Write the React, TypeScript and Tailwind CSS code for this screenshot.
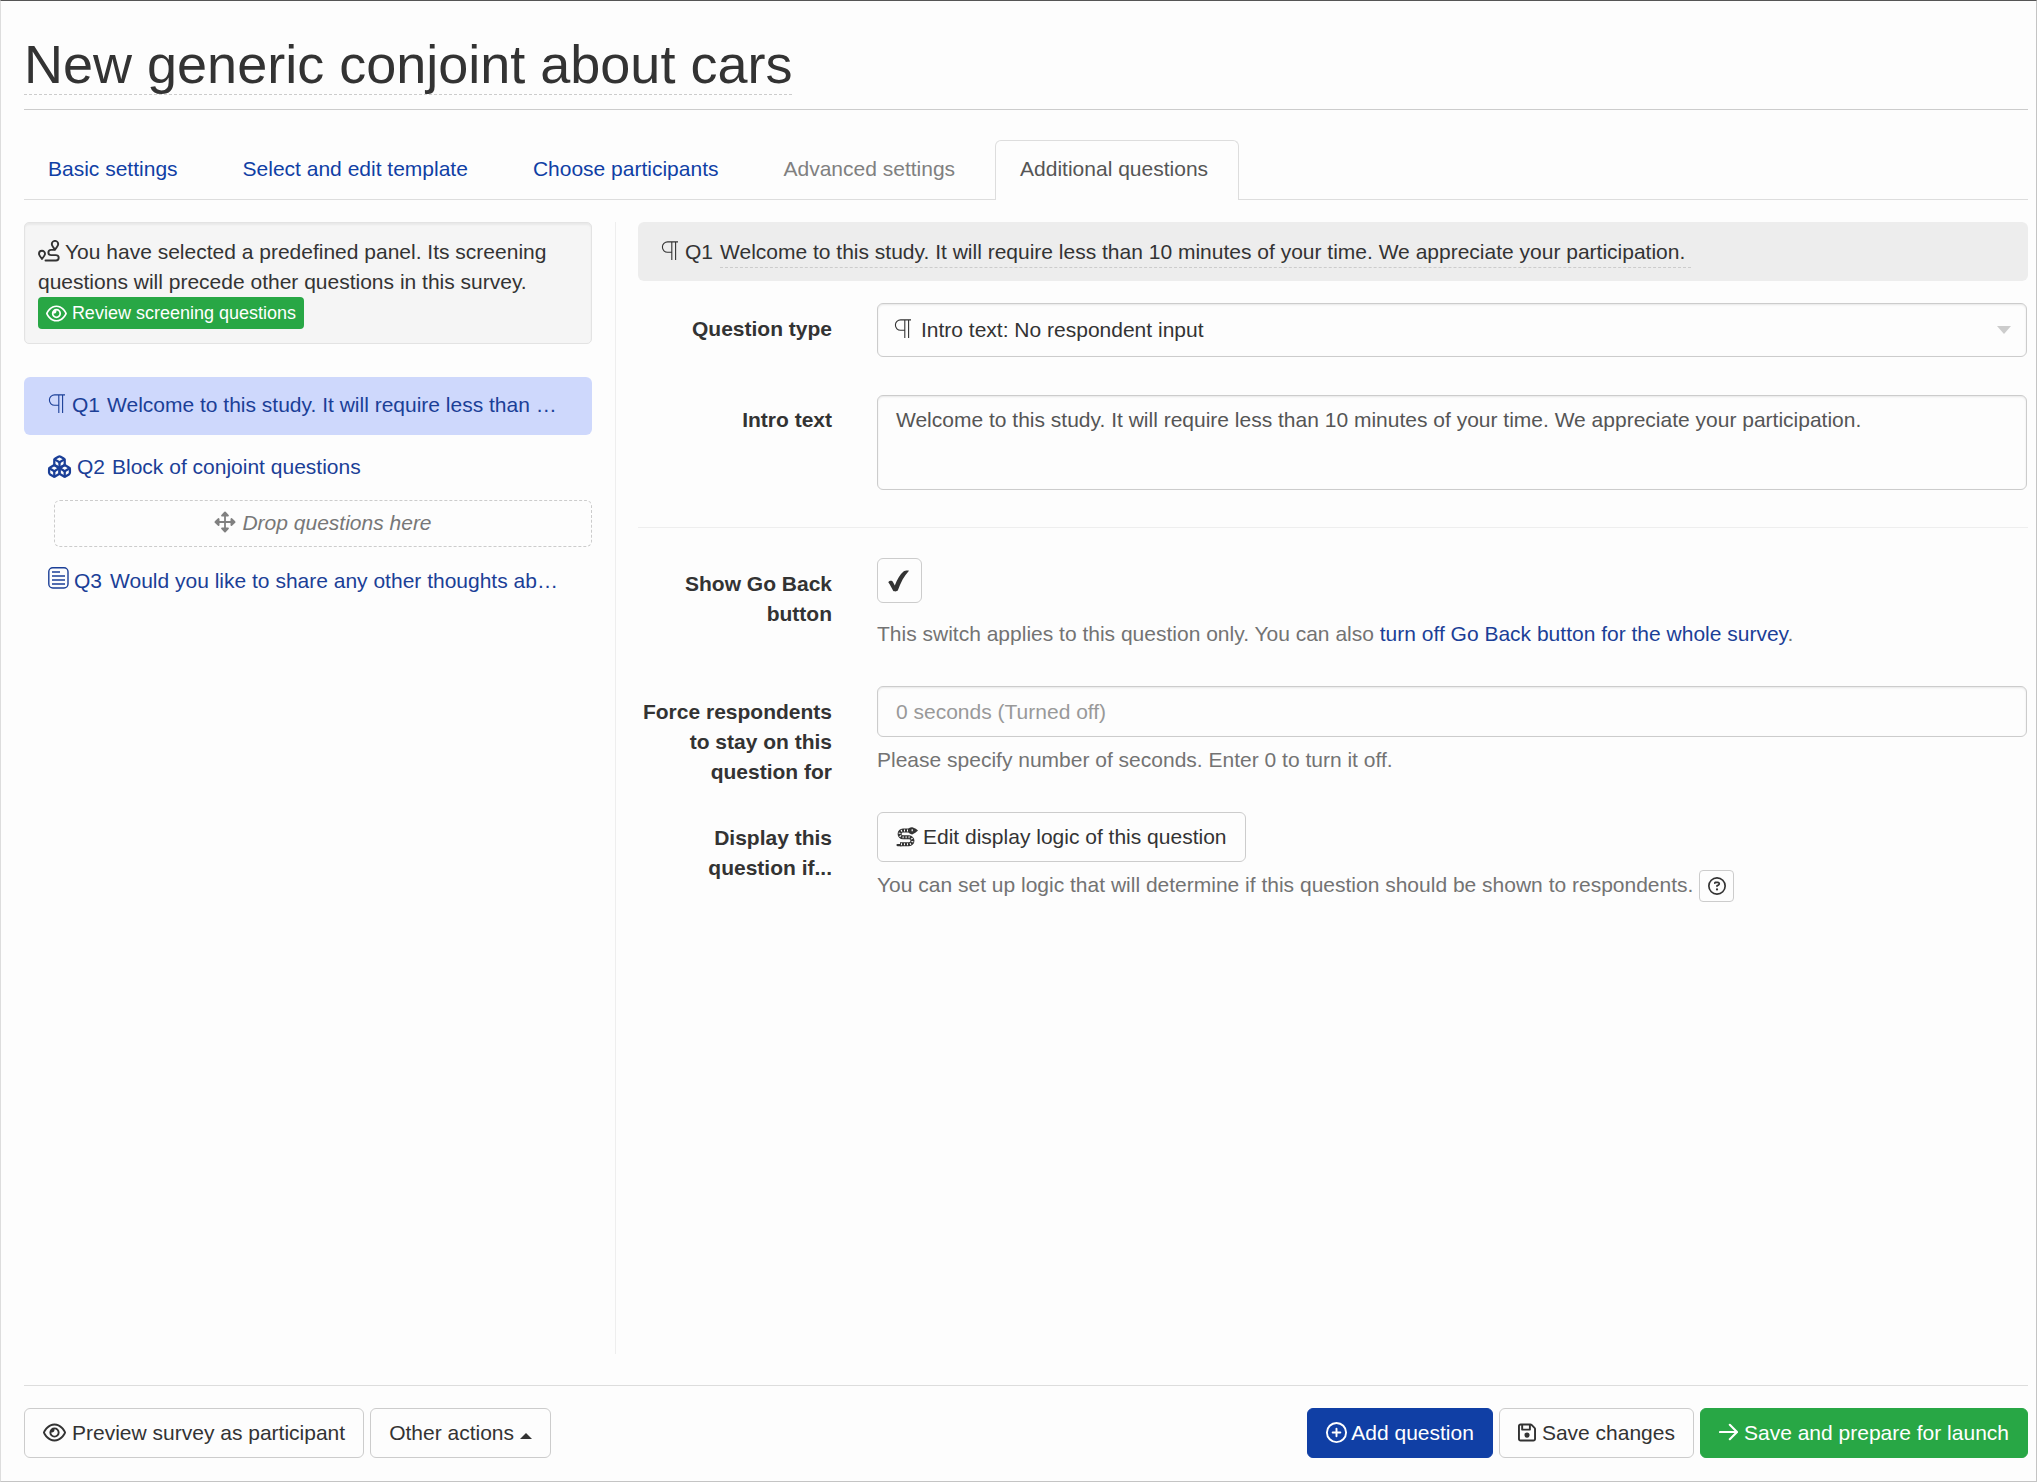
import { FC, ReactNode } from "react";
import { Boxes, CirclePlus } from "lucide-react";
import { FaRegEye, FaRegFloppyDisk, FaRegCircleQuestion } from "react-icons/fa6";

interface IconProps {
  className?: string;
}

const ParagraphIcon: FC<IconProps> = ({ className = "" }) => (
  <svg viewBox="0 0 17 19" fill="none" stroke="currentColor" strokeWidth="1.1" className={`inline-block w-[17px] h-[19px] ${className}`}>
    <path d="M17 .9H6.6a5.2 5.2 0 0 0 0 10.4h4.2M10.8.9V19M14.6.9V19" />
  </svg>
);

const RouteIcon: FC<IconProps> = ({ className = "" }) => (
  <svg viewBox="0 0 22 22" fill="none" stroke="currentColor" strokeWidth="1.9" strokeLinejoin="round" strokeLinecap="round" className={`inline-block w-[22px] h-[22px] ${className}`}>
    <path d="M17 9.6c-1.7-2-3.2-3.8-3.2-5.5a3.2 3.2 0 0 1 6.4 0c0 1.7-1.5 3.5-3.2 5.5Z" />
    <path d="M4 19c-1.7-2-3-3.6-3-5.2a3 3 0 0 1 6 0c0 1.6-1.3 3.2-3 5.2Z" />
    <path d="M16.5 9.9H13a2.6 2.6 0 0 0 0 5.2h5a2.7 2.7 0 0 1 0 5.4H7.5" />
  </svg>
);

const MoveIcon: FC<IconProps> = ({ className = "" }) => (
  <svg viewBox="0 0 22 22" fill="currentColor" stroke="currentColor" strokeWidth="1.8" strokeLinejoin="round" className={`inline-block w-[22px] h-[22px] ${className}`}>
    <path fill="none" d="M11 2v18M2 11h18" />
    <path d="M11 1.4 8 4.6h6ZM11 20.6l-3-3.2h6ZM1.4 11l3.2-3v6ZM20.6 11l-3.2-3v6Z" />
  </svg>
);

const FormIcon: FC<IconProps> = ({ className = "" }) => (
  <svg viewBox="0 0 21 22" fill="none" stroke="currentColor" strokeWidth="1.4" className={`inline-block w-[21px] h-[22px] ${className}`}>
    <rect x=".8" y=".8" width="19.2" height="20.2" rx="4" />
    <path d="M4 5h8M4 9h13M4 13h13M4 17h13" />
  </svg>
);

const CheckIcon: FC<IconProps> = ({ className = "" }) => (
  <svg viewBox="0 0 22 22" fill="currentColor" className={`w-[22px] h-[22px] ${className}`}>
    <path d="M.3 12.3c1.4-1.8 3.7-2 4.8 0l1.7 3.200C9.3 9.3 12 4.3 15.500 1.500c1.5-1 3.900-1.100 5.500-.8C16 6 12.700 12.500 9.900 20.300c-.5 1.400-4.200 1.600-4.900.3C3.700 18.200 2.200 15 .3 12.300Z" />
  </svg>
);

const SnakeIcon: FC<IconProps> = ({ className = "" }) => (
  <svg viewBox="0 0 22 21" fill="none" stroke="currentColor" className={`inline-block w-[22px] h-[21px] ${className}`}>
    <path strokeWidth="4" d="M14 3.500H7a3.400 3.400 0 0 0 0 6.800h6a3.400 3.400 0 0 1 0 6.900H4" />
    <path strokeWidth="2.200" strokeLinecap="round" d="M1.500 18.100h4" />
    <path className="stroke-white" strokeWidth="2" strokeDasharray="1 2" d="M12 3.500H7a3.400 3.400 0 0 0 0 6.800h6a3.400 3.400 0 0 1 0 6.900H4" />
    <path fill="currentColor" stroke="none" d="M12 3.500C12 1.200 14.300 0 16.400.3L19.800 1.700 22 3.500l-2.300 1.900-3.500 2C14 7.100 12 5.700 12 3.500Z" />
    <path className="stroke-white" strokeWidth="1.200" d="M16.200 2.200v2" />
  </svg>
);

const ArrowIcon: FC<IconProps> = ({ className = "" }) => (
  <svg viewBox="0 0 19 18" fill="none" stroke="currentColor" strokeWidth="2.1" strokeLinecap="round" strokeLinejoin="round" className={`inline-block w-[19px] h-[18px] ${className}`}>
    <path d="M1 9h17M10.8 1.8 18 9l-7.2 7.2" />
  </svg>
);

const tabs = [
  { label: "Basic settings", style: "pl-[23px] pr-[24px] text-[#103fa5] border-transparent" },
  { label: "Select and edit template", style: "px-[24px] text-[#103fa5] border-transparent" },
  { label: "Choose participants", style: "px-[24px] text-[#103fa5] border-transparent" },
  { label: "Advanced settings", style: "px-[24px] text-[#808080] border-transparent" },
  { label: "Additional questions", style: "pl-[24px] pr-[30px] text-[#555] border-[#ddd] bg-[#fdfdfd]" },
];

interface RowProps {
  label: string;
  className?: string;
  labelClass?: string;
  children: ReactNode;
}

const Row: FC<RowProps> = ({ label, className = "", labelClass = "pt-[11px]", children }) => (
  <div className={`flex ${className}`}>
    <div className={`w-[194px] shrink-0 text-right font-bold ${labelClass}`}>{label}</div>
    <div className="ml-[45px] mr-px flex-1 min-w-0">{children}</div>
  </div>
);

const fieldClass = "w-full rounded-[6px] border border-[#ccc] shadow-[inset_0_1px_2px_rgba(0,0,0,0.09)]";
const buttonClass = "h-[50px] px-[18px] flex items-center rounded-[6px] border whitespace-nowrap";

const App: FC = () => {
  return (
    <div className="w-[2037px] h-[1482px] flex flex-col overflow-hidden bg-[#fdfdfd] border border-t-[#555] border-l-[#ddd] border-r-[#c4c4c4] border-b-[#c4c4c4] pl-[23px] pr-[8px] font-['Liberation_Sans',Arial,sans-serif] text-[21px] leading-[30px] text-[#333]">
      <header className="h-[109px] shrink-0 border-b border-[#ccc] pt-[32px]">
        <h1 className="inline-block h-[62px] border-b border-dashed border-[#ccc] text-[54px] leading-[62px] whitespace-nowrap">
          New generic conjoint about cars
        </h1>
      </header>

      <nav className="mt-[30px] h-[60px] shrink-0 flex gap-[15px] border-b border-[#ddd]">
        {tabs.map((tab) => (
          <a key={tab.label} className={`h-[60px] pt-[13px] rounded-t-[6px] border border-b-0 whitespace-nowrap ${tab.style}`}>
            {tab.label}
          </a>
        ))}
      </nav>

      <main className="mt-[22px] h-[1132px] shrink-0 flex">
        {/* Question list */}
        <aside className="w-[592px] shrink-0 border-r border-[#eee] pr-[23px]">
          <div className="h-[122px] rounded-[5px] border border-[#e3e3e3] bg-[#f5f5f5] pl-[13px] pt-[14px] shadow-[inset_0_2px_2px_rgba(0,0,0,0.05)] whitespace-nowrap">
            <p><RouteIcon className="mr-[5px] align-[-3px]" />You have selected a predefined panel. Its screening</p>
            <p>questions will precede other questions in this survey.</p>
            <button className="flex h-[32px] w-[266px] items-center rounded-[4px] bg-[#28a745] px-[8px] text-[18px] text-white">
              <FaRegEye className="mr-[5px] size-[21px]" />Review screening questions
            </button>
          </div>

          <div className="mt-[33px] h-[58px] rounded-[6px] bg-[#ced8fc] pl-[24px] pt-[13px] text-[#1b3f97] whitespace-nowrap">
            <ParagraphIcon className="mr-[7px] align-[-1px]" />Q1<span className="ml-[7px]">Welcome to this study. It will require less than …</span>
          </div>
          <div className="mt-[17px] h-[30px] flex items-center pl-[23px] text-[#1b3f97] whitespace-nowrap">
            <Boxes className="mr-[5px] mb-[2px] size-[25px]" strokeWidth={2.2} />Q2<span className="ml-[7px]">Block of conjoint questions</span>
          </div>
          <div className="mt-[18px] ml-[30px] h-[47px] flex items-center justify-center rounded-[6px] border border-dashed border-[#ccc] pb-[2px] italic text-[#777]">
            <MoveIcon className="mr-[6px] mb-[2px] text-[#808080]" />Drop questions here
          </div>
          <div className="mt-[19px] h-[30px] pl-[24px] text-[#1b3f97] whitespace-nowrap">
            <FormIcon className="mr-[5px] align-[-1px]" />Q3<span className="ml-[8px]">Would you like to share any other thoughts ab…</span>
          </div>
        </aside>

        {/* Editor of the selected question */}
        <section className="ml-[22px] flex-1 min-w-0">
          <div className="h-[59px] rounded-[6px] bg-[#ededed] pl-[23px] pt-[15px] whitespace-nowrap">
            <ParagraphIcon className="mr-[7px] align-[-1px]" />Q1
            <span className="ml-[7px] inline-block h-[31px] border-b border-dashed border-[#ccc] pr-[6px]">
              Welcome to this study. It will require less than 10 minutes of your time. We appreciate your participation.
            </span>
          </div>

          <Row label="Question type" className="mt-[22px]">
            <div className={`flex h-[54px] items-center pl-[16px] pr-[15px] ${fieldClass}`}>
              <ParagraphIcon className="mr-[10px] mb-[3px]" />
              <span className="flex-1">Intro text: No respondent input</span>
              <span className="border-x-[7px] border-t-[8px] border-x-transparent border-t-[#ccc]" />
            </div>
          </Row>

          <Row label="Intro text" className="mt-[38px]" labelClass="pt-[10px]">
            <div className={`h-[95px] px-[18px] pt-[9px] text-[#555] ${fieldClass}`}>
              Welcome to this study. It will require less than 10 minutes of your time. We appreciate your participation.
            </div>
          </Row>

          <hr className="mt-[37px] border-[#eee]" />

          <Row label="Show Go Back button" className="mt-[30px]">
            <div className="flex h-[45px] w-[45px] items-center justify-center rounded-[6px] border border-[#ccc]">
              <CheckIcon className="mr-[2px]" />
            </div>
            <p className="mt-[16px] text-[#737373] whitespace-nowrap">
              This switch applies to this question only. You can also <a className="text-[#1b3f97]">turn off Go Back button for the whole survey</a>.
            </p>
          </Row>

          <Row label="Force respondents to stay on this question for" className="mt-[37px]">
            <div className={`h-[51px] px-[18px] pt-[10px] text-[#999] ${fieldClass}`}>0 seconds (Turned off)</div>
            <p className="mt-[8px] text-[#737373]">Please specify number of seconds. Enter 0 to turn it off.</p>
          </Row>

          <Row label="Display this question if..." className="mt-[25px]">
            <button className={`border-[#ccc] ${buttonClass}`}>
              <SnakeIcon className="mr-[5px]" />Edit display logic of this question
            </button>
            <p className="mt-[8px] flex h-[32px] items-center text-[#737373] whitespace-nowrap">
              <span className="-mt-[2px]">You can set up logic that will determine if this question should be shown to respondents.</span>
              <span className="ml-[6px] flex h-[32px] w-[35px] items-center justify-center rounded-[4px] border border-[#ccc] text-[#333]">
                <FaRegCircleQuestion className="size-[18px]" />
              </span>
            </p>
          </Row>
        </section>
      </main>

      <footer className="mt-[31px] flex h-[73px] shrink-0 items-end gap-[6px] border-t border-[#ddd]">
        <button className={`border-[#ccc] ${buttonClass}`}>
          <FaRegEye className="mr-[6px] mb-[2px] size-[23px]" />Preview survey as participant
        </button>
        <button className={`border-[#ccc] ${buttonClass}`}>
          Other actions
          <span className="ml-[6px] mt-[5px] border-x-[6px] border-b-[6px] border-x-transparent border-b-[#333]" />
        </button>
        <button className={`ml-auto border-[#103fa5] bg-[#103fa5] text-white ${buttonClass}`}>
          <CirclePlus className="-ml-px mr-[3px] mb-[2px] size-[23px]" />Add question
        </button>
        <button className={`border-[#ccc] ${buttonClass}`}>
          <FaRegFloppyDisk className="mr-[6px] mb-[2px] h-[21px] w-[18px]" />Save changes
        </button>
        <button className={`border-[#28a745] bg-[#28a745] text-white ${buttonClass}`}>
          <ArrowIcon className="mr-[6px] mb-[2px]" />Save and prepare for launch
        </button>
      </footer>
    </div>
  );
};

export default App;
